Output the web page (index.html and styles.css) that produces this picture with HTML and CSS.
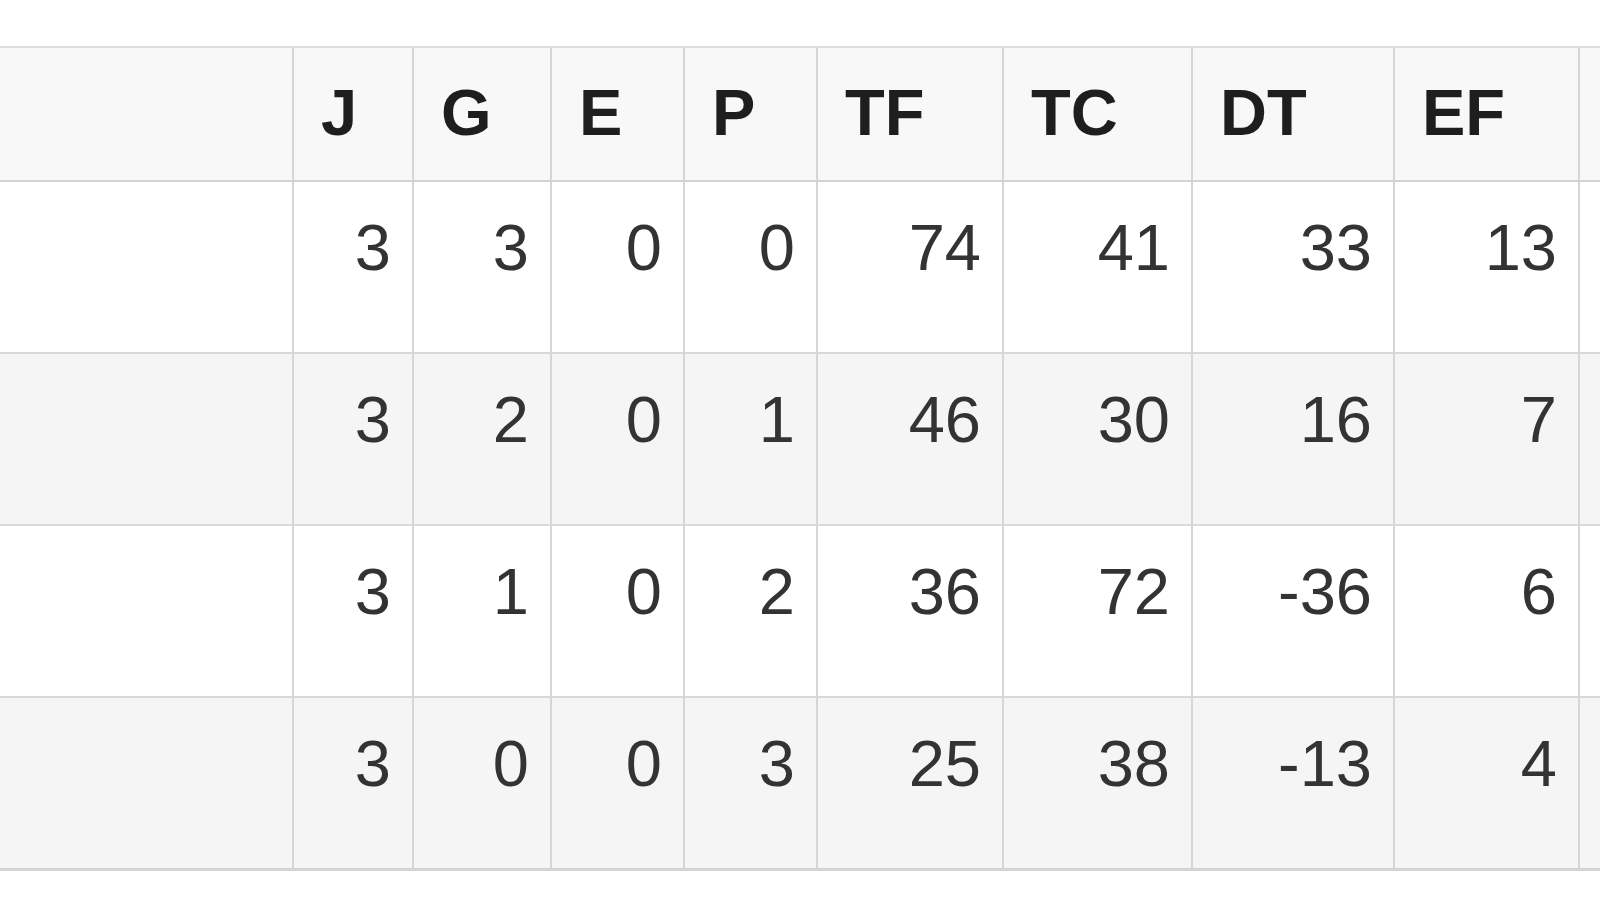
FILE: index.html
```html
<!DOCTYPE html>
<html lang="es">
<head>
<meta charset="utf-8">
<title>Clasificación</title>
<link rel="stylesheet" href="styles.css">
</head>
<body>
<div class="frame">
  <table class="standings">
    <thead>
      <tr>
        <th class="c-team"></th>
        <th class="c-j">J</th>
        <th class="c-g">G</th>
        <th class="c-e">E</th>
        <th class="c-p">P</th>
        <th class="c-tf">TF</th>
        <th class="c-tc">TC</th>
        <th class="c-dt">DT</th>
        <th class="c-ef">EF</th>
        <th class="c-more"></th>
      </tr>
    </thead>
    <tbody>
      <tr>
        <td class="team"></td>
        <td>3</td><td>3</td><td>0</td><td>0</td><td>74</td><td>41</td><td>33</td><td>13</td><td></td>
      </tr>
      <tr>
        <td class="team"></td>
        <td>3</td><td>2</td><td>0</td><td>1</td><td>46</td><td>30</td><td>16</td><td>7</td><td></td>
      </tr>
      <tr>
        <td class="team"></td>
        <td>3</td><td>1</td><td>0</td><td>2</td><td>36</td><td>72</td><td>-36</td><td>6</td><td></td>
      </tr>
      <tr>
        <td class="team"></td>
        <td>3</td><td>0</td><td>0</td><td>3</td><td>25</td><td>38</td><td>-13</td><td>4</td><td></td>
      </tr>
    </tbody>
  </table>
</div>
</body>
</html>
```

FILE: styles.css
```css
html, body {
  margin: 0;
  padding: 0;
  background: #ffffff;
  overflow: hidden;
}

.frame {
  width: 1600px;
  height: 900px;
  overflow: hidden;
  padding-top: 46px;
  box-sizing: border-box;
}

.standings {
  border-collapse: separate;
  border-spacing: 0;
  table-layout: fixed;
  width: 1780px;
  font-family: "Liberation Sans", Arial, sans-serif;
  font-size: 65px;
  line-height: 91px;
  border-top: 2px solid #dcdcdc;
}

.standings th,
.standings td {
  box-sizing: border-box;
  border-right: 2px solid #d6d6d6;
  border-bottom: 2px solid #d9d9d9;
  vertical-align: top;
  white-space: nowrap;
}

.standings th {
  background: #f8f8f8;
  color: #1e1e1e;
  font-weight: bold;
  text-align: left;
  padding: 19px 0 22px 27px;
  border-bottom: 2px solid #d3d3d3;
}

.standings td {
  color: #333333;
  text-align: right;
  padding: 20px 21px 59px 0;
}

.standings tbody tr:nth-child(even) td {
  background: #f5f5f5;
}

.standings tbody tr:last-child td {
  border-bottom: 3px solid #d4d4d4;
}

.c-team { width: 294px; }
.c-j { width: 120px; }
.c-g { width: 138px; }
.c-e { width: 133px; }
.c-p { width: 133px; }
.c-tf { width: 186px; }
.c-tc { width: 189px; }
.c-dt { width: 202px; }
.c-ef { width: 185px; }
.c-more { width: 200px; }
```
